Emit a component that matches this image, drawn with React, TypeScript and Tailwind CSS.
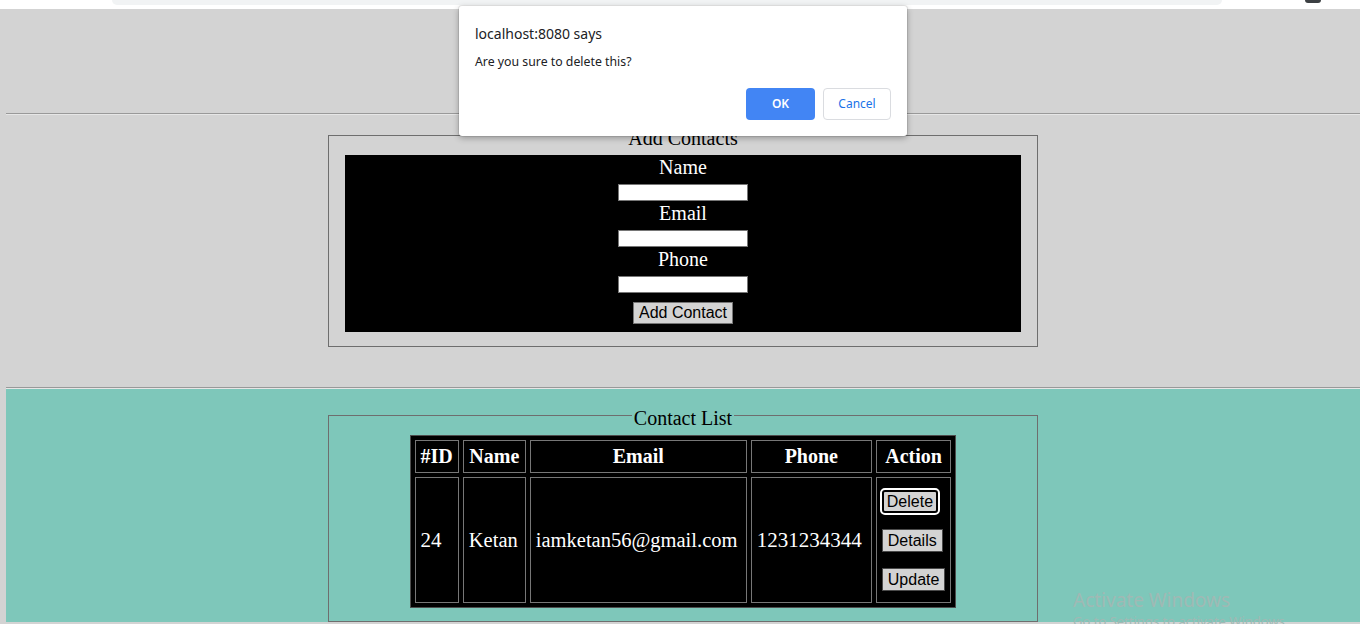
const serif = "font-['Liberation_Serif',serif]"
const sans = "font-['Liberation_Sans',Arial,sans-serif]"

const columns = [
  { label: '#ID', width: 'w-[44px]' },
  { label: 'Name', width: 'w-[63px]' },
  { label: 'Email', width: 'w-[217px]' },
  { label: 'Phone', width: 'w-[121px]' },
  { label: 'Action', width: 'w-[75px]' },
]

const contact = { id: 24, name: 'Ketan', email: 'iamketan56@gmail.com', phone: '1231234344' }

function Field({ label }: { label: string }) {
  return (
    <>
      <label className="text-[20px] leading-[23px]">{label}</label>
      <div className="h-[23px] pt-[5px]">
        <input className="block w-[130px] h-[17px] bg-white border border-[#767676]" />
      </div>
    </>
  )
}

function AddContacts() {
  return (
    <fieldset className={`w-[710px] mx-auto border border-[#6e6e6e] px-4 pt-[5px] pb-[14px] ${serif}`}>
      <legend className="mx-auto px-[2px] pt-[6px] text-[20px] leading-[23px] text-black">Add Contacts</legend>
      <div className="h-[177px] bg-black pt-[1px] flex flex-col items-center text-white">
        <Field label="Name" />
        <Field label="Email" />
        <Field label="Phone" />
        <button className={`mt-[8px] h-[22px] px-[5px] bg-[#d3d3d3] border border-[#767676] text-black text-[16px] leading-[18px] ${sans}`}>
          Add Contact
        </button>
      </div>
    </fieldset>
  )
}

function ContactList() {
  const btn = `h-[23px] px-[5px] bg-[#d3d3d3] border border-[#4a4a4a] text-black text-[16px] leading-[19px] ${sans}`
  const cell = 'border border-[#777777] px-[5px] py-1 leading-[23px]'

  return (
    <fieldset className={`w-[710px] mx-auto border border-[#6e6e6e] px-4 pt-[5px] pb-[13px] ${serif}`}>
      <legend className="mx-auto px-[2px] pt-[6px] text-[20px] leading-[23px] text-black">Contact List</legend>
      <table className="mx-auto border-separate border-spacing-[4px] border border-[#4d4d4d] bg-black text-white">
        <thead>
          <tr>
            {columns.map((c) => (
              <th key={c.label} className={`${cell} ${c.width} text-[20px] font-bold text-center`}>
                {c.label}
              </th>
            ))}
          </tr>
        </thead>
        <tbody>
          <tr>
            <td className={`${cell} text-[21px] align-middle text-left`}>{contact.id}</td>
            <td className={`${cell} text-[20.5px] align-middle text-left`}>{contact.name}</td>
            <td className={`${cell} text-[20.5px] align-middle text-left`}>{contact.email}</td>
            <td className={`${cell} text-[21px] align-middle text-left`}>{contact.phone}</td>
            <td className={`${cell} align-middle`}>
              <div className="flex flex-col items-start gap-[16px] pt-[8px] pb-[7px]">
                <button className={`h-[23px] px-[3px] bg-[#d3d3d3] border-2 border-black rounded-[3px] outline-2 outline-white text-black text-[16px] leading-[19px] ${sans}`}>
                  Delete
                </button>
                <button className={btn}>Details</button>
                <button className={btn}>Update</button>
              </div>
            </td>
          </tr>
        </tbody>
      </table>
    </fieldset>
  )
}

function ConfirmDialog() {
  return (
    <div className="absolute left-[459px] top-[6px] w-[448px] h-[130px] bg-white rounded-[3px] shadow-[0_0_0_1px_rgba(0,0,0,0.08),0_2px_6px_rgba(0,0,0,0.3)] px-4 pt-[18px] font-['Noto_Sans',sans-serif]">
      <p className="text-[14px] leading-[20px] text-[#202124]">localhost:8080 says</p>
      <p className="mt-[10px] text-[12.3px] leading-[16px] text-[#202124]">Are you sure to delete this?</p>
      <div className="mt-[18px] flex justify-end gap-2">
        <button className="w-[69px] h-[32px] rounded-[4px] bg-[#4285f4] text-white text-[12px] font-semibold">OK</button>
        <button className="w-[68px] h-[32px] rounded-[4px] bg-white border border-[#dadce0] text-[#1a73e8] text-[12px]">Cancel</button>
      </div>
    </div>
  )
}

export default function App() {
  return (
    <div className="relative h-[624px] overflow-hidden bg-[#d3d3d3]">
      <div className="h-[9px] bg-white pl-[112px] flex">
        <div className="w-[1110px] h-[5px] bg-[#f1f3f4] rounded-b-[6px]" />
        <div className="ml-[83px] w-[16px] h-[3px] rounded-b-full bg-[#3c4043]" />
      </div>

      <div className="pl-[6px]">
        <div className="h-[104px]" />
        <div className="border-t border-t-[#999999] border-b border-b-[#e6e6e6]" />

        <section className="pt-[6px] pb-[40px]">
          <AddContacts />
        </section>

        <div className="border-t border-t-[#999999] border-b border-b-[#e6e6e6]" />

        <section className="bg-[#7ec7ba] pt-[12px]">
          <ContactList />
        </section>
      </div>

      <ConfirmDialog />

      <div className="absolute left-[1073px] top-[588px] text-[#a0b9b4] font-['Noto_Sans',sans-serif]">
        <p className="text-[19px] leading-[24px]">Activate Windows</p>
        <p className="text-[13px] leading-[18px]">Go to Settings to activate Windows.</p>
      </div>
    </div>
  )
}
